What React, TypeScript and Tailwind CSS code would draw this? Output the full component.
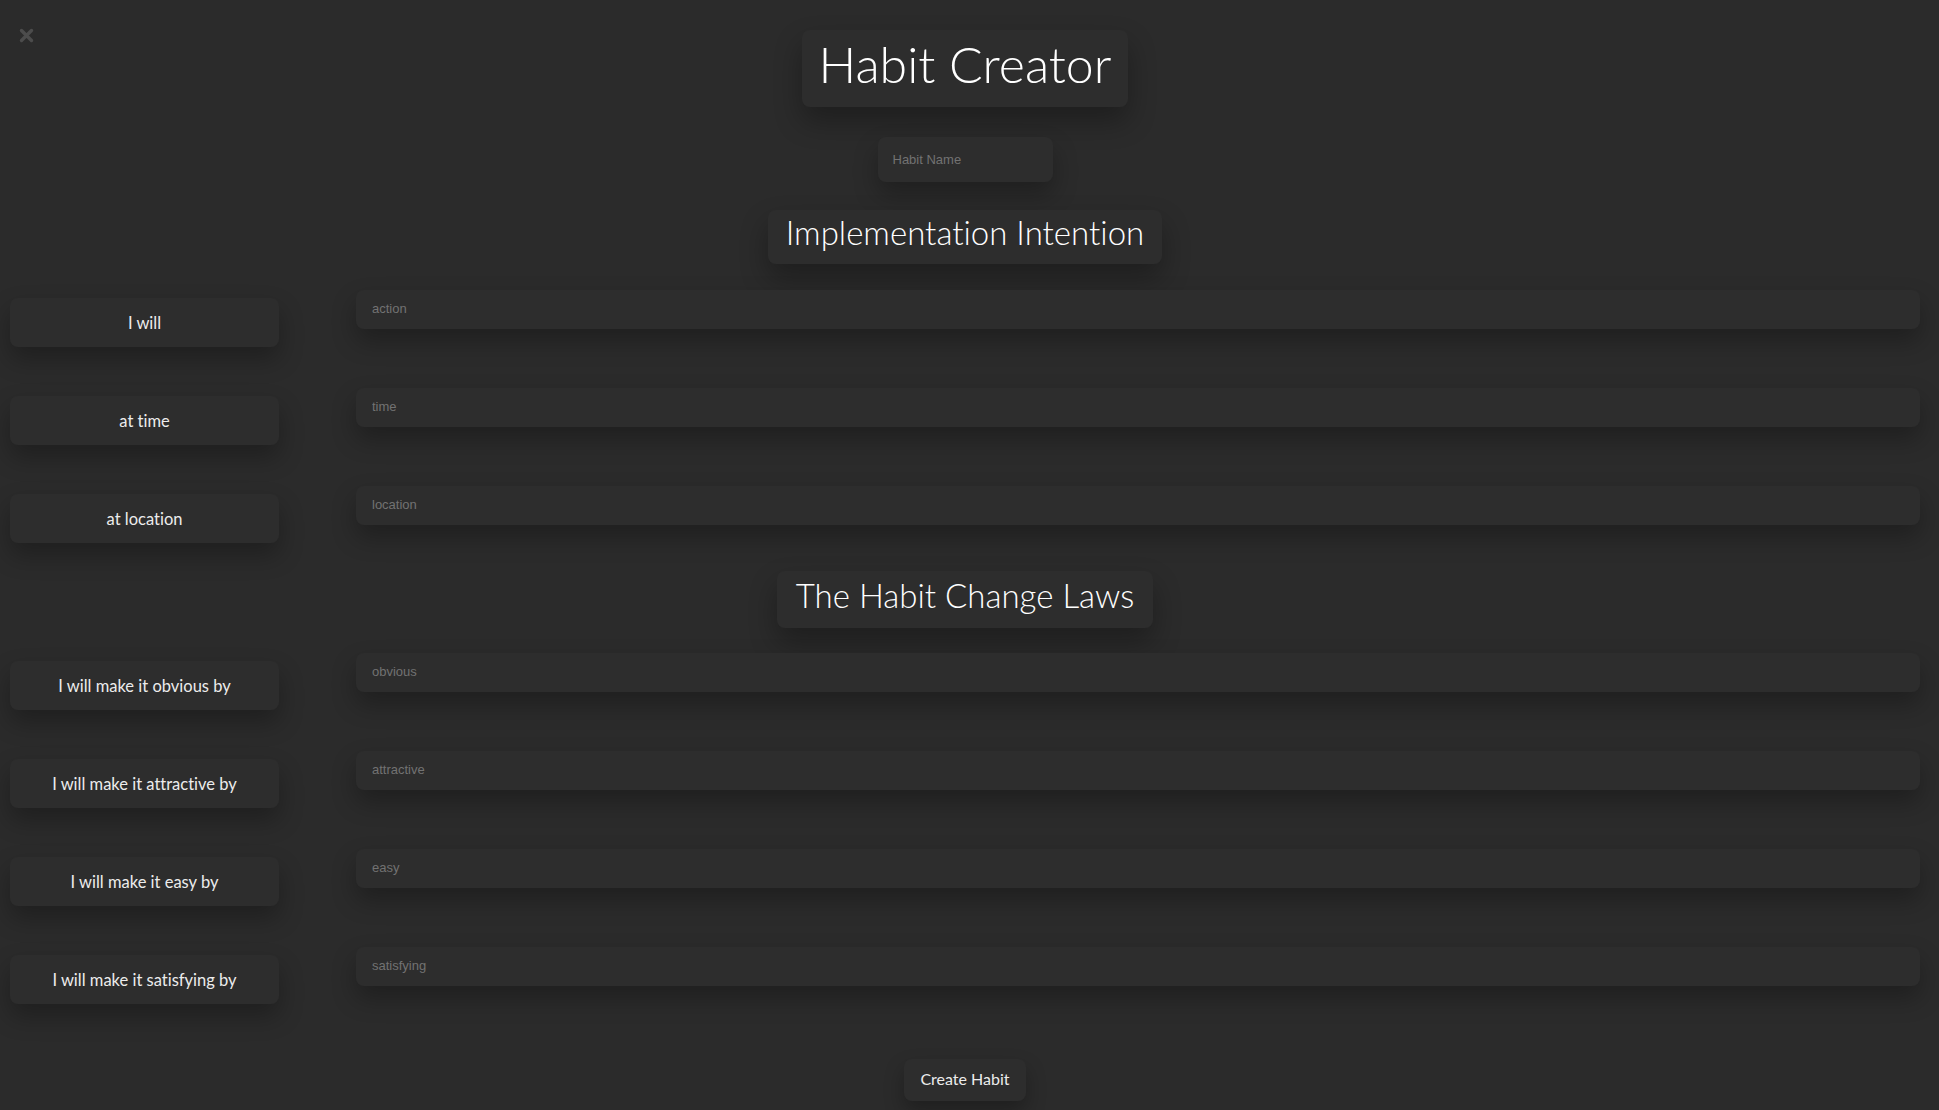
import React from "react";

const font = { fontFamily: "Lato, 'Noto Sans', sans-serif" };

function Row({ label, ph }: { label: string; ph: string }) {
  return (
    <div className="flex items-start w-full h-[57px]">
      <div className="ml-[10px] mt-[8px] w-[269px] h-[49px] shrink-0 rounded-lg bg-[#2d2d2d] shadow-[0_12px_24px_rgba(0,0,0,0.28)] flex items-center justify-center text-[16.5px] text-[#ececec] pt-[1px]">
        {label}
      </div>
      <div className="ml-[77px] mr-[10px] flex-1 h-[39px] rounded-lg bg-[#2d2d2d] shadow-[0_12px_24px_rgba(0,0,0,0.28)] px-[16px] pt-[5px]">
        <input
          placeholder={ph}
          className="w-full bg-transparent outline-none text-[13px] leading-[16px] text-[#ddd] placeholder:text-[#727272]"
          style={{ fontFamily: "'Liberation Sans', Arial, sans-serif" }}
        />
      </div>
    </div>
  );
}

export default function App() {
  return (
    <div className="relative w-full min-h-[1110px] bg-[#2b2b2b] flex flex-col items-center pt-[30px] pr-[9px] [font-variant-ligatures:none]" style={font}>
      <div className="absolute left-[19px] top-[28px] w-[15px] h-[15px]">
        <svg viewBox="0 0 15 15" width="15" height="15">
          <path d="M2.5 2.5 L12.5 12.5 M12.5 2.5 L2.5 12.5" stroke="#4c4c4c" strokeWidth="3.4" strokeLinecap="round" />
        </svg>
      </div>

      <div className="w-[326px] h-[77px] rounded-lg bg-[#2d2d2d] shadow-[0_14px_28px_rgba(0,0,0,0.3)] flex items-center justify-center pb-[9px]">
        <span className="text-[50px] font-light text-white leading-none">Habit Creator</span>
      </div>

      <div className="mt-[30px] w-[175px] h-[45px] rounded-lg bg-[#2d2d2d] shadow-[0_12px_24px_rgba(0,0,0,0.28)] flex items-center px-[15px]">
        <input
          placeholder="Habit Name"
          className="w-full bg-transparent outline-none text-[13px] text-[#ddd] placeholder:text-[#727272]"
          style={{ fontFamily: "'Liberation Sans', Arial, sans-serif" }}
        />
      </div>

      <div className="mt-[28px] w-[394px] h-[54px] rounded-lg bg-[#2d2d2d] shadow-[0_14px_28px_rgba(0,0,0,0.3)] flex items-center justify-center pb-[9px]">
        <span className="text-[33px] font-light text-white leading-none">Implementation Intention</span>
      </div>

      <div className="mt-[26px] w-full flex flex-col gap-[41px]">
        <Row label="I will" ph="action" />
        <Row label="at time" ph="time" />
        <Row label="at location" ph="location" />
      </div>

      <div className="mt-[28px] w-[376px] h-[57px] rounded-lg bg-[#2d2d2d] shadow-[0_14px_28px_rgba(0,0,0,0.3)] flex items-center justify-center pb-[9px]">
        <span className="text-[33px] font-light text-white leading-none">The Habit Change Laws</span>
      </div>

      <div className="mt-[25px] w-full flex flex-col gap-[41px]">
        <Row label="I will make it obvious by" ph="obvious" />
        <Row label="I will make it attractive by" ph="attractive" />
        <Row label="I will make it easy by" ph="easy" />
        <Row label="I will make it satisfying by" ph="satisfying" />
      </div>

      <button className="mt-[55px] w-[122px] h-[42px] rounded-lg bg-[#2d2d2d] shadow-[0_10px_20px_rgba(0,0,0,0.28)] text-[16px] text-[#ececec] flex items-center justify-center pb-[3px]">
        Create Habit
      </button>
    </div>
  );
}
